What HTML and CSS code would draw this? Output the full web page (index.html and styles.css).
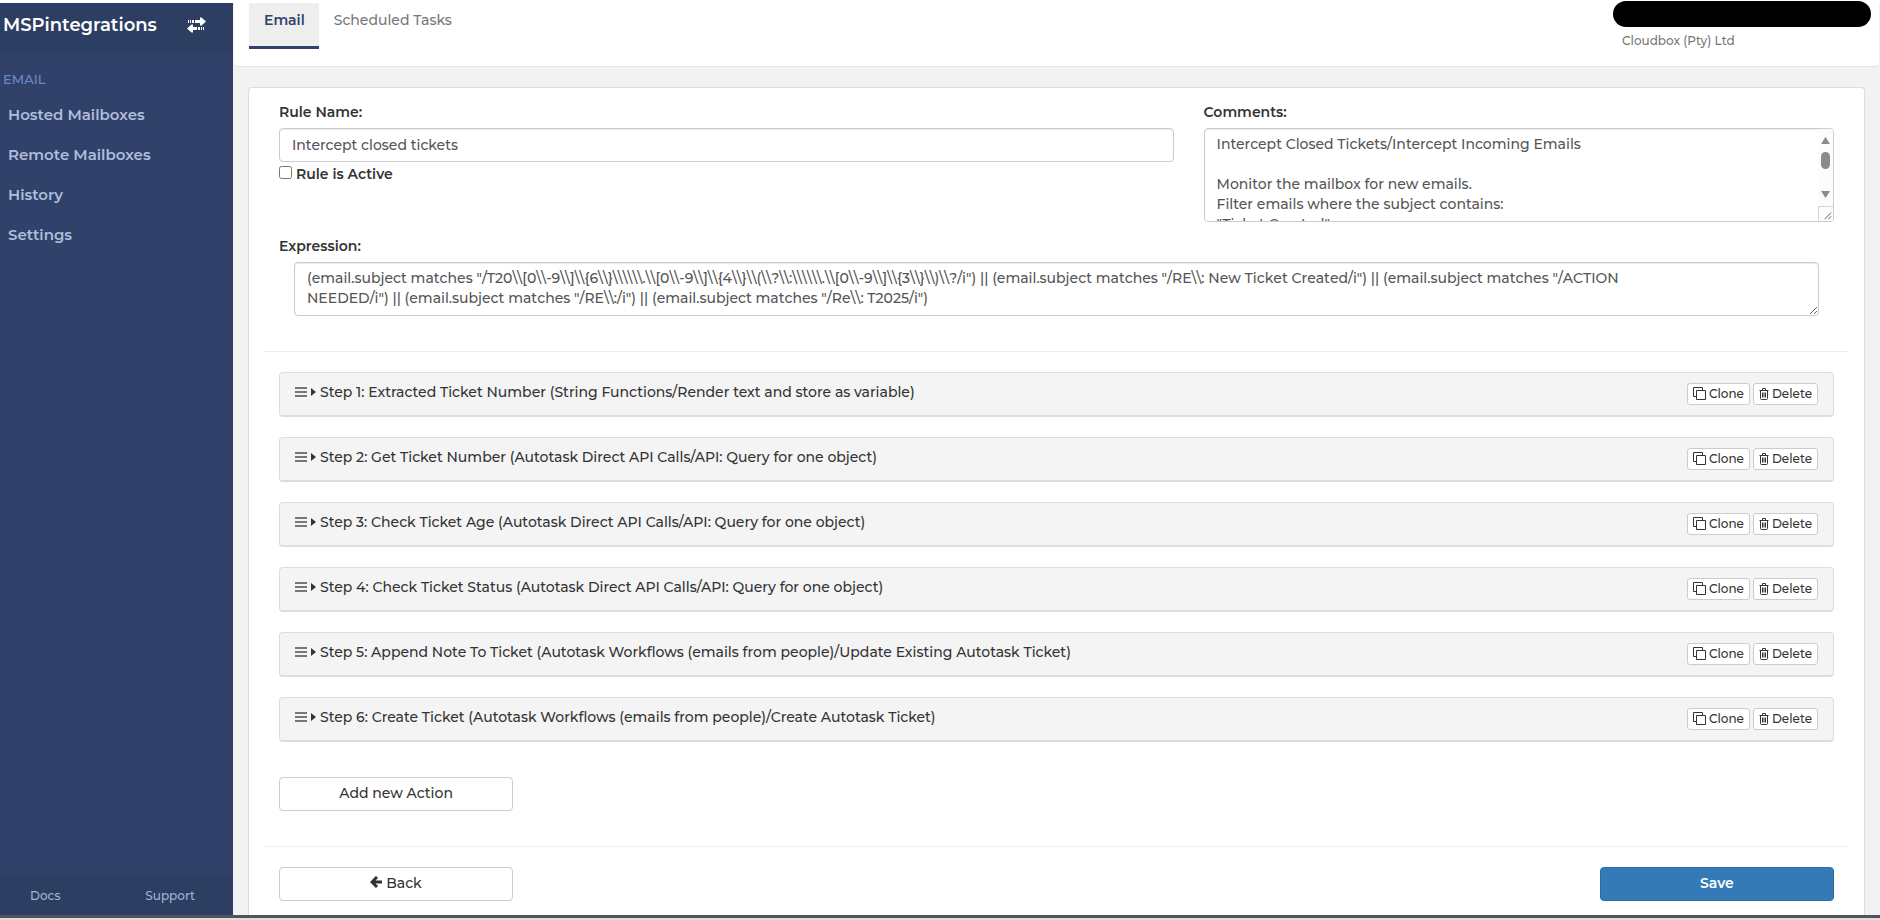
FILE: index.html
```html
<!DOCTYPE html>
<html lang="en">
<head>
    <meta charset="UTF-8">
    <meta name="viewport" content="width=device-width, initial-scale=1.0">
    <title>MSPintegrations</title>
    <link rel="stylesheet" href="styles.css">
</head>
<body>

<svg class="sprite" aria-hidden="true">
    <symbol id="icon-bars" viewBox="0 0 12 10">
        <path d="M0 0h12v2H0zM0 4h12v2H0zM0 8h12v2H0z"/>
    </symbol>
    <symbol id="icon-caret" viewBox="0 0 5 8">
        <path d="M0 0l5 4-5 4z"/>
    </symbol>
    <symbol id="icon-clone" viewBox="0 0 13 13">
        <path d="M3.5 9.5h-3v-9h9v3M3.5 3.5h9v9h-9z" fill="none" stroke="currentColor"/>
    </symbol>
    <symbol id="icon-trash" viewBox="0 0 10 12">
        <path d="M0.500 2.5h9M3.5 2.5v-2h3v2M1.5 2.5v8q0 1 1 1h5q1 0 1-1v-8M3.5 4.5v5M5 4.5v5M6.5 4.5v5" fill="none" stroke="currentColor"/>
    </symbol>
</svg>

<div class="app">
    <aside class="sidebar">
        <div class="brand">
            <a href="#" class="brand-name">MSPintegrations</a>
            <button class="switch" aria-label="Switch account">
                <svg width="19" height="16" viewBox="0 0 19 16" fill="currentColor">
                    <path d="M1 3h1v3H1zM3 3h1v3H3zM5 3h2v3H5zM8 3h5V0.500h1.500L19 4.500 14.500 8.500H13V6H8z"/>
                    <path d="M17 10h-1v3h1zM15 10h-1v3h1zM13 10h-2v3h2zM10 10H6V7.500H4.500L0 11.500 4.500 15.500H6V13h4z"/>
                </svg>
            </button>
        </div>
        <nav class="menu">
            <h2>EMAIL</h2>
            <a href="#">Hosted Mailboxes</a>
            <a href="#">Remote Mailboxes</a>
            <a href="#">History</a>
            <a href="#">Settings</a>
        </nav>
        <div class="sidebar-footer">
            <a href="#">Docs</a>
            <a href="#">Support</a>
        </div>
    </aside>

    <div class="main">
        <header class="topbar">
            <nav class="tabs">
                <a href="#" class="active">Email</a>
                <a href="#">Scheduled Tasks</a>
            </nav>
            <div class="account">
                <span class="account-name"></span>
                <span class="account-company">Cloudbox (Pty) Ltd</span>
            </div>
        </header>

        <form class="card">
            <div class="row">
                <div class="col-7">
                    <label for="ruleName">Rule Name:</label>
                    <input type="text" id="ruleName" class="form-control" value="Intercept closed tickets">
                    <div class="checkbox">
                        <input type="checkbox" id="ruleActive">
                        <label for="ruleActive">Rule is Active</label>
                    </div>
                </div>
                <div class="col-5">
                    <label for="comments">Comments:</label>
                    <div class="comments">
                        <textarea id="comments" class="form-control">Intercept Closed Tickets/Intercept Incoming Emails

Monitor the mailbox for new emails.
Filter emails where the subject contains:
"Ticket Created"</textarea>
                        <div class="scrollbar">
                            <svg width="9" height="7" viewBox="0 0 9 7"><path d="M4.500 0L9 7H0z"/></svg>
                            <span class="thumb"></span>
                            <svg class="down" width="9" height="7" viewBox="0 0 9 7"><path d="M4.500 7L0 0h9z"/></svg>
                            <svg class="grip" width="15" height="15" viewBox="0 0 15 15"><path d="M6 13l7-7M10 13l3-3"/></svg>
                        </div>
                    </div>
                </div>
            </div>

            <div class="expression">
                <label for="expression">Expression:</label>
                <textarea id="expression" class="form-control">(email.subject matches "/T20\\[0\\-9\\]\\{6\\}\\\\\\.\\[0\\-9\\]\\{4\\}\\(\\?\\:\\\\\\.\\[0\\-9\\]\\{3\\}\\)\\?/i") || (email.subject matches "/RE\\: New Ticket Created/i") || (email.subject matches "/ACTION
NEEDED/i") || (email.subject matches "/RE\\:/i") || (email.subject matches "/Re\\: T2025/i")</textarea>
            </div>

            <hr>

            <div class="steps">
                <div class="step">
                    <svg class="bars"><use href="#icon-bars"/></svg>
                    <svg class="caret"><use href="#icon-caret"/></svg>
                    <span class="step-title">Step 1: Extracted Ticket Number (String Functions/Render text and store as variable)</span>
                    <button type="button" class="btn-xs"><svg class="clone"><use href="#icon-clone"/></svg>Clone</button>
                    <button type="button" class="btn-xs"><svg class="trash"><use href="#icon-trash"/></svg>Delete</button>
                </div>
                <div class="step">
                    <svg class="bars"><use href="#icon-bars"/></svg>
                    <svg class="caret"><use href="#icon-caret"/></svg>
                    <span class="step-title">Step 2: Get Ticket Number (Autotask Direct API Calls/API: Query for one object)</span>
                    <button type="button" class="btn-xs"><svg class="clone"><use href="#icon-clone"/></svg>Clone</button>
                    <button type="button" class="btn-xs"><svg class="trash"><use href="#icon-trash"/></svg>Delete</button>
                </div>
                <div class="step">
                    <svg class="bars"><use href="#icon-bars"/></svg>
                    <svg class="caret"><use href="#icon-caret"/></svg>
                    <span class="step-title">Step 3: Check Ticket Age (Autotask Direct API Calls/API: Query for one object)</span>
                    <button type="button" class="btn-xs"><svg class="clone"><use href="#icon-clone"/></svg>Clone</button>
                    <button type="button" class="btn-xs"><svg class="trash"><use href="#icon-trash"/></svg>Delete</button>
                </div>
                <div class="step">
                    <svg class="bars"><use href="#icon-bars"/></svg>
                    <svg class="caret"><use href="#icon-caret"/></svg>
                    <span class="step-title">Step 4: Check Ticket Status (Autotask Direct API Calls/API: Query for one object)</span>
                    <button type="button" class="btn-xs"><svg class="clone"><use href="#icon-clone"/></svg>Clone</button>
                    <button type="button" class="btn-xs"><svg class="trash"><use href="#icon-trash"/></svg>Delete</button>
                </div>
                <div class="step">
                    <svg class="bars"><use href="#icon-bars"/></svg>
                    <svg class="caret"><use href="#icon-caret"/></svg>
                    <span class="step-title">Step 5: Append Note To Ticket (Autotask Workflows (emails from people)/Update Existing Autotask Ticket)</span>
                    <button type="button" class="btn-xs"><svg class="clone"><use href="#icon-clone"/></svg>Clone</button>
                    <button type="button" class="btn-xs"><svg class="trash"><use href="#icon-trash"/></svg>Delete</button>
                </div>
                <div class="step">
                    <svg class="bars"><use href="#icon-bars"/></svg>
                    <svg class="caret"><use href="#icon-caret"/></svg>
                    <span class="step-title">Step 6: Create Ticket (Autotask Workflows (emails from people)/Create Autotask Ticket)</span>
                    <button type="button" class="btn-xs"><svg class="clone"><use href="#icon-clone"/></svg>Clone</button>
                    <button type="button" class="btn-xs"><svg class="trash"><use href="#icon-trash"/></svg>Delete</button>
                </div>
            </div>

            <div class="actions">
                <button type="button" class="btn">Add new Action</button>
            </div>

            <hr>

            <div class="actions">
                <button type="button" class="btn">
                    <svg width="12" height="12" viewBox="0 0 12 12" fill="none" stroke="currentColor" stroke-width="3"><path d="M12 6H2M7 1L2 6l5 5"/></svg>
                    Back
                </button>
                <button type="submit" class="btn btn-primary">Save</button>
            </div>
        </form>
    </div>
</div>
<div class="window-edge"></div>

</body>
</html>
```
FILE: styles.css
```css
* {
    box-sizing: border-box;
}
body {
    margin: 0;
    padding-top: 3px;
    display: flex;
    flex-direction: column;
    min-height: 100vh;
    background: #fff;
    color: #333;
    font-family: Montserrat, Inter, sans-serif;
    font-size: 14px;
    font-weight: 500;
    line-height: 20px;
}
a {
    text-decoration: none;
}
button, input, textarea {
    font: inherit;
}
.sprite {
    display: none;
}
.app {
    display: flex;
    flex: 1;
}

/* sidebar */
.sidebar {
    display: flex;
    flex-direction: column;
    width: 233px;
    flex-shrink: 0;
    background: #304269;
}
.brand {
    display: flex;
    align-items: center;
    justify-content: space-between;
    height: 52px;
    padding: 0 27px 8px 3px;
    background: #2c3e62;
}
.brand-name {
    color: #fff;
    font-size: 18px;
    font-weight: 600;
}
.switch {
    display: flex;
    padding: 0;
    border: 0;
    background: none;
    color: #fff;
}
.menu {
    flex: 1;
    padding-top: 14px;
}
.menu h2 {
    margin: 0 0 6px;
    padding-left: 3px;
    color: #6d88c6;
    font-size: 13px;
    font-weight: 500;
    line-height: 20px;
}
.menu a {
    display: block;
    padding: 10px 8px;
    color: #b0bddc;
    font-size: 15px;
    font-weight: 600;
}
.sidebar-footer {
    display: flex;
    height: 40px;
    padding: 1px 38px 0 30px;
    justify-content: space-between;
    align-items: center;
    background: #2c3e62;
}
.sidebar-footer a {
    color: #a4b2d5;
    font-size: 12px;
}

/* top bar */
.main {
    display: flex;
    flex-direction: column;
    flex: 1;
    min-width: 0;
    background: #f2f2f2;
}
.topbar {
    display: flex;
    justify-content: space-between;
    height: 64px;
    margin: 0 1px;
    padding: 0 8px 0 15px;
    background: #fff;
    border-bottom: 1px solid #e4e4e4;
    border-radius: 0 0 4px 4px;
}
.tabs {
    display: flex;
    align-items: flex-start;
}
.tabs a {
    height: 46px;
    padding: 7px 14px 7px 15px;
    color: #777;
}
.tabs .active {
    background: #eee;
    border-bottom: 3px solid #304269;
    color: #304269;
    font-weight: 600;
}
.account {
    width: 258px;
    margin-top: -2px;
}
.account-name {
    display: block;
    height: 26px;
    border-radius: 13px;
    background: #000;
}
.account-company {
    display: block;
    padding: 4px 9px;
    color: #777;
    font-size: 12px;
}

/* rule form */
.card {
    flex: 1;
    margin: 20px 15px 0;
    padding: 14px 15px;
    background: #fff;
    border: 1px solid #ddd;
    border-bottom: 0;
    border-radius: 4px 4px 0 0;
}
.row {
    display: grid;
    grid-template-columns: 7fr 5fr;
    height: 134px;
}
.col-7, .col-5, .expression, .steps {
    padding: 0 15px;
}
label {
    display: block;
    margin-bottom: 6px;
    font-weight: 600;
}
.form-control {
    display: block;
    width: 100%;
    height: 34px;
    padding: 6px 12px;
    border: 1px solid #ccc;
    border-radius: 4px;
    background: #fff;
    box-shadow: inset 0 1px 1px rgba(0, 0, 0, 0.08);
    color: #555;
}
textarea.form-control {
    height: 54px;
    padding-top: 5px;
}
.comments {
    position: relative;
}
.comments textarea.form-control {
    height: 94px;
}
/* always visible scrollbar, lies over the right edge of the textarea */
.scrollbar {
    position: absolute;
    top: 1px;
    right: 1px;
    bottom: 1px;
    display: flex;
    flex-direction: column;
    align-items: center;
    width: 15px;
    padding-top: 8px;
    background: #fcfcfc;
    border-radius: 0 3px 3px 0;
    fill: #8b8b8b;
    pointer-events: none;
}
.thumb {
    width: 9px;
    height: 17px;
    margin-top: 8px;
    border-radius: 5px;
    background: #8b8b8b;
}
.scrollbar .down {
    margin-top: auto;
}
.grip {
    margin-top: 8px;
    border-top: 1px solid #d5d5d5;
    border-left: 1px solid #d5d5d5;
    stroke: #555;
}
.checkbox {
    display: flex;
    gap: 4px;
}
.checkbox input {
    width: 13px;
    height: 13px;
    margin: 4px 0 0;
}
.checkbox label {
    margin: 2px 0 0;
}
/* keeps the double backslashes readable */
.expression textarea {
    width: calc(100% - 30px);
    margin: 0 15px;
    font-kerning: none;
}
hr {
    margin: 35px 0 20px;
    border: 0;
    border-top: 1px solid #eee;
}
.step {
    display: flex;
    align-items: center;
    height: 45px;
    margin-bottom: 20px;
    padding: 0 15px;
    background: #f4f4f4;
    border: 1px solid #ddd;
    border-bottom-width: 2px;
    border-radius: 4px;
}
.step-title {
    flex: 1;
    padding-bottom: 4px;
}
.bars {
    width: 12px;
    height: 10px;
    margin: 0 4px 4px 0;
    fill: #777;
}
.caret {
    width: 5px;
    height: 8px;
    margin: 0 4px 4px 0;
    fill: #333;
}
.btn-xs {
    display: flex;
    align-items: center;
    gap: 3px;
    height: 22px;
    margin-left: 3px;
    padding: 0 5px 1px;
    border: 1px solid #ccc;
    border-radius: 3px;
    background: #fff;
    color: #333;
    font-size: 12px;
}
.clone {
    width: 13px;
    height: 13px;
}
.trash {
    width: 10px;
    height: 12px;
}
.actions {
    display: flex;
    justify-content: space-between;
    padding: 0 15px;
}
.steps + .actions {
    margin-top: 35px;
}
.steps .step:last-child {
    margin-bottom: 0;
}
.btn {
    width: calc(100% * 2 / 12 - 25px);
    height: 34px;
    padding: 0 0 2px;
    border: 1px solid #ccc;
    border-radius: 4px;
    background: #fff;
    color: #333;
}
.btn-primary {
    background: #337ab7;
    border-color: #2e6da4;
    color: #fff;
    font-weight: 600;
}
.window-edge {
    height: 5px;
    background: #e5dada;
    border-top: 3px solid #505459;
}
```
